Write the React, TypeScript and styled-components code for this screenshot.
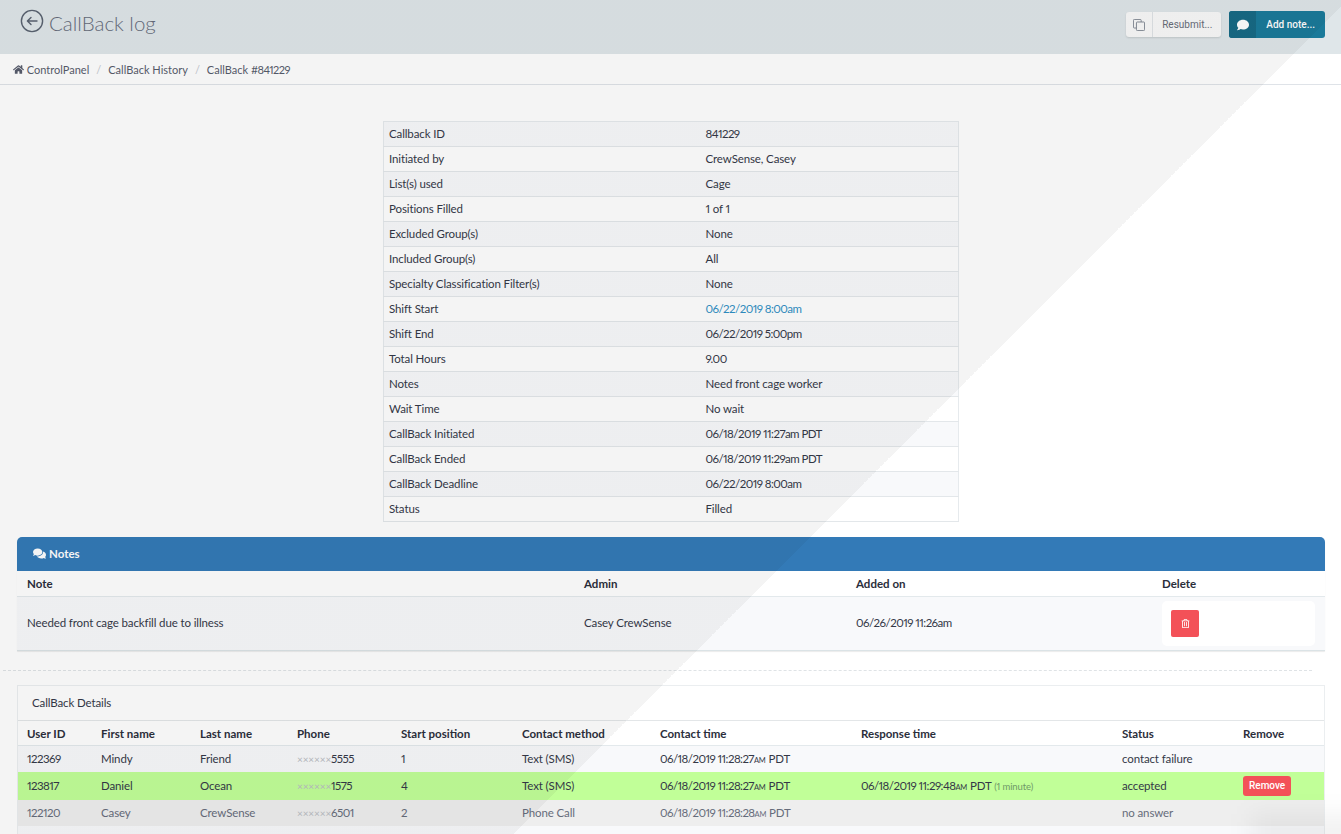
import React from 'react';
import styled, {createGlobalStyle} from 'styled-components';
import {FaHome, FaComment, FaComments, FaRegTrashAlt} from 'react-icons/fa';

const GlobalStyle = createGlobalStyle`
    html, body {
        margin: 0;
        padding: 0;
        height: 100%;
        overflow: hidden;
        background: #fff;
    }
    body {
        font-family: "Lato", "Noto Sans", sans-serif;
        font-size: 11.5px;
        letter-spacing: -.12px;
        color: #343847;
        font-variant-numeric: proportional-nums;
    }
    * {
        box-sizing: border-box;
    }
`;

const summary: {label: string, value: string, link?: boolean, numeric?: boolean}[] = [
    {label: 'Callback ID', value: '841229', numeric: true},
    {label: 'Initiated by', value: 'CrewSense, Casey'},
    {label: 'List(s) used', value: 'Cage'},
    {label: 'Positions Filled', value: '1 of 1'},
    {label: 'Excluded Group(s)', value: 'None'},
    {label: 'Included Group(s)', value: 'All'},
    {label: 'Specialty Classification Filter(s)', value: 'None'},
    {label: 'Shift Start', value: '06/22/2019 8:00am', link: true, numeric: true},
    {label: 'Shift End', value: '06/22/2019 5:00pm', numeric: true},
    {label: 'Total Hours', value: '9.00', numeric: true},
    {label: 'Notes', value: 'Need front cage worker'},
    {label: 'Wait Time', value: 'No wait'},
    {label: 'CallBack Initiated', value: '06/18/2019 11:27am PDT', numeric: true},
    {label: 'CallBack Ended', value: '06/18/2019 11:29am PDT', numeric: true},
    {label: 'CallBack Deadline', value: '06/22/2019 8:00am', numeric: true},
    {label: 'Status', value: 'Filled'},
];

const noteWidths = [557, 272, 306, 173];
const detailWidths = [74, 99, 97, 104, 121, 138, 201, 261, 121, 90];
const detailHead = ['User ID', 'First name', 'Last name', 'Phone', 'Start position', 'Contact method', 'Contact time', 'Response time', 'Status', 'Remove'];

type Detail = {
    id: string, first: string, last: string, phone: string, start: string, method: string,
    contact: string, response?: string, status: string, tone?: 'accepted' | 'muted', remove?: boolean,
};

const details: Detail[] = [
    {id: '122369', first: 'Mindy', last: 'Friend', phone: '5555', start: '1', method: 'Text (SMS)', contact: '06/18/2019 11:28:27', status: 'contact failure'},
    {id: '123817', first: 'Daniel', last: 'Ocean', phone: '1575', start: '4', method: 'Text (SMS)', contact: '06/18/2019 11:28:27', response: '06/18/2019 11:29:48', status: 'accepted', tone: 'accepted', remove: true},
    {id: '122120', first: 'Casey', last: 'CrewSense', phone: '6501', start: '2', method: 'Phone Call', contact: '06/18/2019 11:28:28', status: 'no answer', tone: 'muted'},
    {id: '122411', first: 'Rusty', last: 'Ryan', phone: '7342', start: '3', method: 'Text (SMS)', contact: '06/18/2019 11:28:29', status: 'contact failure'},
];

const Time = ({date}: {date: string}) => (
    <>
        <Digits>{date}</Digits><SmallCaps>AM</SmallCaps> PDT
    </>
);

export default function App() {
    return (
        <Page>
            <GlobalStyle/>
            <Header>
                <TitleGroup>
                    <svg width="24" height="24" viewBox="0 0 24 24" fill="none" stroke="#596270" strokeWidth="1.4" strokeLinecap="round" strokeLinejoin="round">
                        <circle cx="12" cy="12" r="10.6"/>
                        <path d="M17 12H7.5M11 8.4 7.4 12l3.6 3.6"/>
                    </svg>
                    <Title>CallBack log</Title>
                </TitleGroup>
                <Actions>
                    <ActionButton>
                        <ActionIcon>
                            <svg width="12" height="12" viewBox="0 0 14 14" fill="none" stroke="#7d8590" strokeWidth="1.1">
                                <path d="M3.5 10.5H1.5a1 1 0 0 1-1-1V1.5a1 1 0 0 1 1-1h7a1 1 0 0 1 1 1v2"/>
                                <rect x="4" y="3.5" width="9.5" height="10" rx="1"/>
                            </svg>
                        </ActionIcon>
                        <ActionLabel>Resubmit...</ActionLabel>
                    </ActionButton>
                    <ActionButton $primary>
                        <ActionIcon $primary><FaComment size={12} color="#fff"/></ActionIcon>
                        <ActionLabel $primary>Add note...</ActionLabel>
                    </ActionButton>
                </Actions>
            </Header>

            <Breadcrumb>
                <Crumb><FaHome size={11}/> ControlPanel</Crumb>
                <CrumbDivider>/</CrumbDivider>
                <Crumb>CallBack History</Crumb>
                <CrumbDivider>/</CrumbDivider>
                <Crumb>CallBack <Digits>#841229</Digits></Crumb>
            </Breadcrumb>

            <Content>
                <SummaryTable>
                    <tbody>
                        {summary.map((row) => (
                            <SummaryRow key={row.label}>
                                <SummaryCell $width={317}>{row.label}</SummaryCell>
                                <SummaryCell $link={row.link} $numeric={row.numeric}>{row.value}</SummaryCell>
                            </SummaryRow>
                        ))}
                    </tbody>
                </SummaryTable>

                <NotesPanel>
                    <NotesHeading><FaComments size={13}/> <span>Notes</span></NotesHeading>
                    <DataTable>
                        <thead>
                            <tr>
                                {['Note', 'Admin', 'Added on', 'Delete'].map((head, key) => (
                                    <HeadCell key={head} $width={noteWidths[key]}>{head}</HeadCell>
                                ))}
                            </tr>
                        </thead>
                        <tbody>
                            <NoteRow>
                                <BodyCell>Needed front cage backfill due to illness</BodyCell>
                                <BodyCell>Casey CrewSense</BodyCell>
                                <BodyCell><Digits>06/26/2019 11:26am</Digits></BodyCell>
                                <DeleteCell>
                                    <DeleteBox>
                                        <DeleteButton><FaRegTrashAlt size={9} color="#fff"/></DeleteButton>
                                    </DeleteBox>
                                </DeleteCell>
                            </NoteRow>
                        </tbody>
                    </DataTable>
                </NotesPanel>

                <Divider/>

                <DetailsPanel>
                    <DetailsHeading>CallBack Details</DetailsHeading>
                    <DataTable>
                        <thead>
                            <tr>
                                {detailHead.map((head, key) => (
                                    <HeadCell key={head} $width={detailWidths[key]}>{head}</HeadCell>
                                ))}
                            </tr>
                        </thead>
                        <tbody>
                            {details.map((row) => (
                                <DetailRow key={row.id} $tone={row.tone}>
                                    <BodyCell><Digits>{row.id}</Digits></BodyCell>
                                    <BodyCell>{row.first}</BodyCell>
                                    <BodyCell>{row.last}</BodyCell>
                                    <BodyCell><Masked>××××××</Masked><Digits>{row.phone}</Digits></BodyCell>
                                    <BodyCell>{row.start}</BodyCell>
                                    <BodyCell>{row.method}</BodyCell>
                                    <BodyCell><Time date={row.contact}/></BodyCell>
                                    <BodyCell>
                                        {row.response && (
                                            <>
                                                <Time date={row.response}/> <Elapsed>(1 minute)</Elapsed>
                                            </>
                                        )}
                                    </BodyCell>
                                    <BodyCell>{row.status}</BodyCell>
                                    <BodyCell>{row.remove && <RemoveButton>Remove</RemoveButton>}</BodyCell>
                                </DetailRow>
                            ))}
                        </tbody>
                    </DataTable>
                </DetailsPanel>
            </Content>

            <CornerGlow/>
            <DiagonalShade/>
        </Page>
    );
}

const Page = styled.div`
    position: relative;
    height: 100vh;
    overflow: hidden;
`;

const DiagonalShade = styled.div`
    position: absolute;
    inset: 0;
    pointer-events: none;
    background: linear-gradient(to bottom right, rgba(0, 0, 0, .045) 50%, transparent 50%) no-repeat;
    background-size: 1347px 1347px;
`;

const CornerGlow = styled.div`
    position: absolute;
    right: -20px;
    bottom: -24px;
    width: 110px;
    height: 44px;
    background: rgba(0, 0, 0, .05);
    filter: blur(12px);
    pointer-events: none;
`;

const Digits = styled.span`
    letter-spacing: -.55px;
`;

const Header = styled.header`
    display: flex;
    align-items: center;
    justify-content: space-between;
    height: 54px;
    padding: 0 16px 0 20px;
    background: #dfe6e9;
`;

const TitleGroup = styled.div`
    display: flex;
    align-items: center;
    gap: 5px;
    margin-top: -12px;
`;

const Title = styled.h1`
    margin: 4px 0 0;
    font-size: 20.5px;
    font-weight: 300;
    letter-spacing: 0;
    color: #666c7b;
`;

const Actions = styled.div`
    display: flex;
    align-items: center;
    gap: 8px;
    margin-top: -5px;
`;

const ActionButton = styled.div<{$primary?: boolean}>`
    display: flex;
    align-items: stretch;
    height: ${({$primary}) => ($primary ? '27px' : '25px')};
    border-radius: 3px;
    overflow: hidden;
    background: ${({$primary}) => ($primary ? '#1a7a9a' : '#f9f9f9')};
    box-shadow: ${({$primary}) => ($primary ? 'none' : '0 1px 2px rgba(0, 0, 0, .12)')};
`;

const ActionIcon = styled.span<{$primary?: boolean}>`
    display: flex;
    align-items: center;
    justify-content: center;
    width: 27px;
    background: ${({$primary}) => ($primary ? '#176a85' : 'transparent')};
    border-right: ${({$primary}) => ($primary ? 'none' : '1px solid #dfe3e6')};
`;

const ActionLabel = styled.span<{$primary?: boolean}>`
    display: flex;
    align-items: center;
    padding: 0 ${({$primary}) => ($primary ? '10px' : '9px')};
    font-family: "Roboto", sans-serif;
    font-size: 10px;
    letter-spacing: 0;
    font-weight: ${({$primary}) => ($primary ? 500 : 400)};
    color: ${({$primary}) => ($primary ? '#fff' : '#676c78')};
`;

const Breadcrumb = styled.nav`
    display: flex;
    align-items: center;
    gap: 7px;
    height: 31px;
    padding: 0 13px;
    font-size: 11px;
    letter-spacing: 0;
    background: #fff;
    border-bottom: 1px solid #dfe3e8;
`;

const Crumb = styled.span`
    color: #575c6c;
    svg {
        vertical-align: -1px;
    }
`;

const CrumbDivider = styled.span`
    color: #c4c8cf;
`;

const Content = styled.main`
    display: flex;
    flex-direction: column;
    padding-top: 36px;
`;

const SummaryTable = styled.table`
    align-self: center;
    width: 576px;
    margin-left: 1px;
    border-collapse: collapse;
    table-layout: fixed;
    border: 1px solid #e6eaed;
`;

const SummaryRow = styled.tr`
    height: 25px;
    border-bottom: 1px solid #e3e7ea;
    background: #fff;
    &:nth-child(odd) {
        background: #f8f9fb;
    }
`;

const SummaryCell = styled.td<{$width?: number, $link?: boolean, $numeric?: boolean}>`
    width: ${({$width}) => ($width ? `${$width}px` : 'auto')};
    padding: 0 5px 2px;
    color: ${({$link}) => ($link ? '#2f8fc4' : 'inherit')};
    letter-spacing: ${({$numeric}) => ($numeric ? '-.55px' : 'inherit')};
`;

const NotesPanel = styled.section`
    margin: 15px 16px 0 17px;
    background: #fff;
    border-radius: 5px 5px 0 0;
    box-shadow: 0 1px 1px rgba(0, 0, 0, .08);
    border-bottom: 1px solid #dbe3e6;
`;

const NotesHeading = styled.h2`
    display: flex;
    align-items: center;
    gap: 3px;
    height: 34px;
    margin: 0;
    padding: 0 16px 2px;
    font-size: 11.5px;
    font-weight: 700;
    letter-spacing: 0;
    color: #fff;
    background: #337ab7;
    border-radius: 5px 5px 0 0;
`;

const DataTable = styled.table`
    width: 100%;
    border-collapse: collapse;
    table-layout: fixed;
`;

const HeadCell = styled.th<{$width: number}>`
    width: ${({$width}) => $width}px;
    height: 25px;
    padding: 1px 10px 0;
    text-align: left;
    font-weight: 700;
    letter-spacing: 0;
    color: #2b2e3b;
    border-bottom: 1px solid #e3e9ec;
`;

const BodyCell = styled.td`
    padding: 0 10px;
    white-space: nowrap;
`;

const NoteRow = styled.tr`
    height: 53px;
    background: #f8f9fb;

    ${BodyCell} {
        padding-bottom: 2px;
    }
`;

const DeleteCell = styled.td`
    padding: 4px 10px;
`;

const DeleteBox = styled.div`
    display: flex;
    align-items: center;
    height: 45px;
    padding-left: 9px;
    background: #fff;
    border-radius: 5px;
`;

const DeleteButton = styled.button`
    display: flex;
    align-items: center;
    justify-content: center;
    width: 28px;
    height: 27px;
    padding: 0;
    background: #f35158;
    border: none;
    border-radius: 2px;
`;

const Divider = styled.hr`
    width: 1309px;
    margin: 19px 0 14px 3px;
    border: none;
    border-top: 1px dashed #dfe3e6;
`;

const DetailsPanel = styled.section`
    margin: 0 16px 0 17px;
    background: #fff;
    border: 1px solid #ebeef0;
    border-bottom: none;

    ${HeadCell}, ${BodyCell} {
        padding-left: 9px;
        padding-right: 9px;
    }
`;

const DetailsHeading = styled.h2`
    display: flex;
    align-items: center;
    height: 35px;
    margin: 0;
    padding: 0 14px;
    font-size: 11.5px;
    font-weight: 400;
    border-bottom: 1px solid #e3e6e8;
`;

const rowBackground = {accepted: '#c1ff98', muted: '#eeeeee'};

const DetailRow = styled.tr<{$tone?: 'accepted' | 'muted'}>`
    height: ${({$tone}) => ($tone === 'accepted' ? '28px' : '26px')};
    background: ${({$tone}) => ($tone ? rowBackground[$tone] : '#f8f9fb')};
    color: ${({$tone}) => ($tone === 'muted' ? '#666c7b' : 'inherit')};
`;

const Masked = styled.span`
    font-size: 10px;
    color: #b9bcc2;
`;

const SmallCaps = styled.span`
    font-size: 7.5px;
    letter-spacing: -.2px;
`;

const Elapsed = styled.span`
    font-size: 9.5px;
    color: #6f9a68;
`;

const RemoveButton = styled.span`
    display: inline-block;
    height: 20px;
    line-height: 20px;
    padding: 0 6px;
    vertical-align: middle;
    font-family: "Roboto", sans-serif;
    font-size: 10px;
    font-weight: 500;
    letter-spacing: 0;
    color: #fff;
    background: #f35158;
    border-radius: 3px;
`;
